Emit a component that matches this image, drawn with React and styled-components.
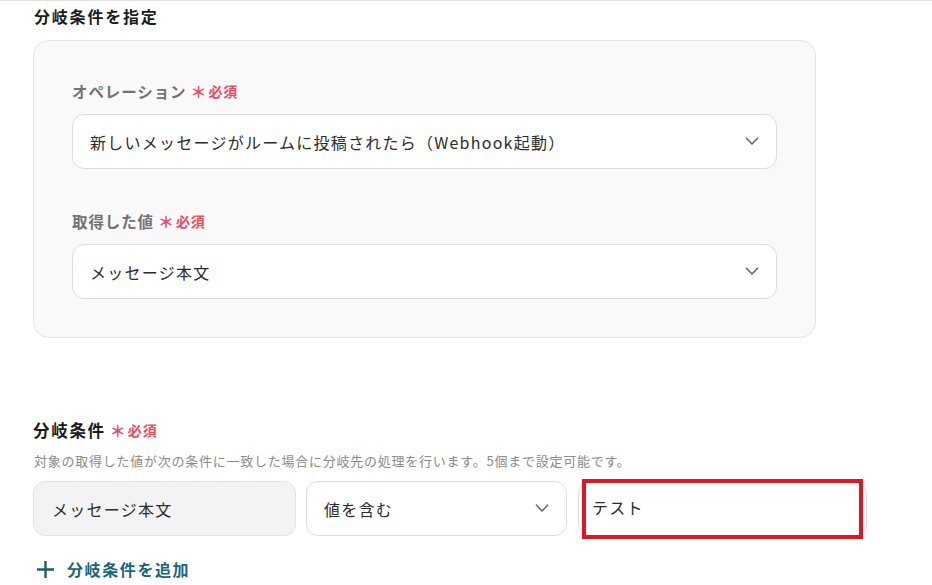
import React from "react";
import styled, { createGlobalStyle } from "styled-components";

const GlobalStyle = createGlobalStyle`
  html, body {
    margin: 0;
    padding: 0;
    background: #fff;
  }
  body {
    font-family: "Noto Sans CJK JP", "Noto Sans", sans-serif;
    color: #222;
  }
  * {
    box-sizing: border-box;
  }
`;

const Page = styled.div`
  width: 932px;
  height: 585px;
  border-top: 1px solid #e2e2e2;
  padding: 0 0 0 33px;
  overflow: hidden;
`;

const Title = styled.h2`
  margin: 4px 0 0 1px;
  font-size: 16px;
  font-weight: 700;
  line-height: 22px;
  letter-spacing: 1.8px;
  color: #1c1c1c;
`;

const Card = styled.div`
  width: 783px;
  margin-top: 13px;
  padding: 39px 38px 38px;
  background: #f9f9fa;
  border: 1px solid #e4e4e6;
  border-radius: 16px;
  display: flex;
  flex-direction: column;
  gap: 41px;
`;

const Field = styled.div`
  display: flex;
  flex-direction: column;
  gap: 12px;
`;

const Label = styled.div`
  display: flex;
  align-items: center;
  font-size: ${(p) => (p.$large ? "16.5px" : "15.5px")};
  font-weight: 700;
  line-height: 22px;
  letter-spacing: ${(p) => (p.$large ? "1.7px" : "0.9px")};
  color: ${(p) => (p.$dark ? "#1c1c1c" : "#737373")};
`;

const Required = styled.span`
  display: inline-flex;
  align-items: center;
  margin-left: 4px;
  color: #ee4a5e;
  font-size: 14px;
  font-weight: 700;
  letter-spacing: 0.8px;

  &::before {
    content: "＊";
    font-size: 16px;
    margin-right: 2px;
    letter-spacing: 0;
  }
`;

const Select = styled.div`
  height: 55px;
  display: flex;
  align-items: center;
  justify-content: space-between;
  padding: 0 17px 0 ${(p) => (p.$pad ? p.$pad : "17px")};
  background: ${(p) => (p.$muted ? "#f3f3f3" : "#fff")};
  border: 1px solid ${(p) => (p.$muted ? "#e3e3e3" : "#dcdcdf")};
  border-radius: 12px;
  font-size: 16px;
  letter-spacing: 1.25px;
  color: #2b2b2b;
  width: ${(p) => (p.$width ? p.$width : "auto")};
  position: relative;
`;

const InputText = styled.span`
  margin-top: -4px;
`;

const Chevron = () => (
  <svg width="14" height="9" viewBox="0 0 14 9" fill="none">
    <path d="M1.5 1.2 L7 7 L12.5 1.2" stroke="#666" strokeWidth="1.6" strokeLinecap="round" strokeLinejoin="round" />
  </svg>
);

const Condition = styled.div`
  margin-top: 81px;
  display: flex;
  flex-direction: column;
`;

const Help = styled.p`
  margin: 11px 0 0 1px;
  font-size: 13px;
  line-height: 18px;
  letter-spacing: 0.75px;
  color: #8a8a8a;
`;

const Row = styled.div`
  display: flex;
  gap: 10px;
  margin-top: 11px;
`;

const Highlight = styled.div`
  position: absolute;
  left: 3px;
  top: -3px;
  width: 281px;
  height: 60px;
  border: 4px solid #e2161f;
  pointer-events: none;
`;

const AddButton = styled.button`
  margin: 21px 0 0 4px;
  padding: 0;
  border: 0;
  background: none;
  display: flex;
  align-items: center;
  gap: 13px;
  font-family: inherit;
  font-size: 16px;
  font-weight: 700;
  letter-spacing: 1.6px;
  color: #1b6479;
  cursor: pointer;
`;

const PlusIcon = () => (
  <svg width="17" height="17" viewBox="0 0 17 17">
    <path d="M8.5 1 V16 M1 8.5 H16" stroke="#1b5f73" strokeWidth="2.4" strokeLinecap="square" />
  </svg>
);

export default function App() {
  return (
    <>
      <GlobalStyle />
      <Page>
        <Title>分岐条件を指定</Title>
        <Card>
          <Field>
            <Label>
              オペレーション<Required>必須</Required>
            </Label>
            <Select>
              新しいメッセージがルームに投稿されたら（Webhook起動）
              <Chevron />
            </Select>
          </Field>
          <Field>
            <Label>
              取得した値<Required>必須</Required>
            </Label>
            <Select>
              メッセージ本文
              <Chevron />
            </Select>
          </Field>
        </Card>

        <Condition>
          <Label $large $dark>
            分岐条件<Required>必須</Required>
          </Label>
          <Help>
            対象の取得した値が次の条件に一致した場合に分岐先の処理を行います。5個まで設定可能です。
          </Help>
          <Row>
            <Select $muted $width="263px" $pad="18px">
              メッセージ本文
            </Select>
            <Select $width="261px">
              値を含む
              <Chevron />
            </Select>
            <Select $width="289px" $pad="13px" style={{ marginLeft: "1px" }}>
              <InputText>テスト</InputText>
              <Highlight />
            </Select>
          </Row>
          <AddButton>
            <PlusIcon />
            分岐条件を追加
          </AddButton>
        </Condition>
      </Page>
    </>
  );
}
